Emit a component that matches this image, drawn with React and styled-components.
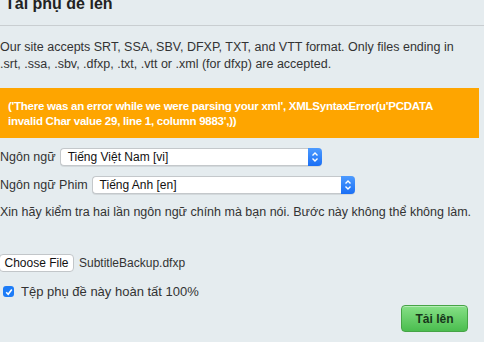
import React from 'react';
import styled, { createGlobalStyle } from 'styled-components';

// --> Styled components start <--
const GlobalStyle = createGlobalStyle`
    html, body {
        margin: 0;
        padding: 0;
        background: #e5ecef;
        overflow: hidden;
    }
    body {
        font-family: "Liberation Sans", Arial, sans-serif;
        color: #333;
    }
`;

//Page wrapper
const Page = styled.div`
    width: 484px;
    height: 342px;
    display: flex;
    flex-direction: column;
`;

//Title with the bottom rule
const Header = styled.div`
    margin-top: -5px;
    padding: 0 0 12px 5px;
    border-bottom: 1px solid #c9ced1;

    h3 {
        margin: 0;
        font-size: 16px;
        line-height: 18px;
        font-weight: bold;
        color: #222;
    }
`;

const Text = styled.p`
    margin: ${p => p.$margin || '0'};
    padding-right: ${p => p.$right || '0'};
    font-size: 12.5px;
    line-height: 17px;
    color: #333;
    white-space: ${p => p.$nowrap ? 'nowrap' : 'normal'};
`;

//orange error box
const Alert = styled.div`
    margin: 15px 5px 0 0;
    padding: 11px 30px 10px 8px;
    background: #fea500;
    color: #fff;
    font-size: 11.5px;
    letter-spacing: -0.25px;
    font-weight: bold;
    line-height: 14.5px;
`;

const Row = styled.label`
    display: flex;
    align-items: center;
    gap: 4px;
    font-size: 12.5px;
    color: #333;
    margin-top: ${p => p.$top || '0'};
`;

const Select = styled.div`
    position: relative;
    display: flex;
    align-items: center;
    width: ${p => p.$width}px;
    height: 18px;
    box-sizing: border-box;
    background: #fff;
    border: 1px solid #c4c8cb;
    border-right: none;
    border-radius: 4px;
    box-shadow: 0 1px 0 rgba(0,0,0,0.08);
    font-size: 12px;
    color: #111;
    padding-left: 7px;

    .arrows {
        position: absolute;
        right: 0;
        top: -1px;
        bottom: -1px;
        width: 14px;
        border-radius: 0 4px 4px 0;
        background: linear-gradient(#4d9bff, #1a6ff5);
        display: flex;
        align-items: center;
        justify-content: center;
    }
`;

const FileRow = styled.div`
    display: flex;
    align-items: center;
    gap: 5px;
    margin-top: 33px;
    font-size: 12px;
    color: #333;
`;

const FileButton = styled.button`
    height: 18px;
    width: 75px;
    padding: 0;
    margin-left: -1px;
    background: #fff;
    border: 1px solid #c2c6c9;
    border-radius: 4px;
    font-family: "Liberation Sans", Arial, sans-serif;
    font-size: 12px;
    color: #111;
`;

const Check = styled.label`
    display: flex;
    align-items: center;
    gap: 7px;
    margin-top: 12px;
    padding-left: 3px;
    font-size: 13px;
    line-height: 15px;
    color: #333;

    .box {
        width: 11px;
        height: 11px;
        border-radius: 3px;
        background: #1d7cf7;
        display: flex;
        align-items: center;
        justify-content: center;
    }
`;

const Actions = styled.div`
    display: flex;
    justify-content: flex-end;
    padding-right: 16px;
    margin-top: 6px;
`;

const UploadButton = styled.button`
    width: 67px;
    height: 27px;
    border: 1px solid #46a446;
    border-radius: 4px;
    background: linear-gradient(#86e086, #4bbd4f);
    box-shadow: inset 0 1px 0 rgba(255,255,255,0.4);
    font-family: "Liberation Sans", Arial, sans-serif;
    font-size: 12px;
    font-weight: bold;
    color: #17361a;
`;
// --> Styled components end <--

const Arrows = () => (
    <span className='arrows'>
        <svg width='8' height='12' viewBox='0 0 8 12' fill='none' stroke='#fff' strokeWidth='1.4'>
            <path d='M1.5 4.5 L4 2 L6.5 4.5' />
            <path d='M1.5 7.5 L4 10 L6.5 7.5' />
        </svg>
    </span>
);

export default function App(){
    return(
        <Page>
            <GlobalStyle />
            <Header><h3>Tải phụ đề lên</h3></Header>
            <Text $margin='13px 0 0 0' $right='18px'>
                Our site accepts SRT, SSA, SBV, DFXP, TXT, and VTT format. Only files ending in .srt, .ssa, .sbv, .dfxp, .txt, .vtt or .xml (for dfxp) are accepted.
            </Text>
            <Alert>
                ('There was an error while we were parsing your xml', XMLSyntaxError(u'PCDATA invalid Char value 29, line 1, column 9883',))
            </Alert>
            <Row $top='10px'>
                Ngôn ngữ
                <Select $width={262}>Tiếng Việt Nam [vi]<Arrows /></Select>
            </Row>
            <Row $top='10px'>
                Ngôn ngữ Phim
                <Select $width={263}>Tiếng Anh [en]<Arrows /></Select>
            </Row>
            <Text $margin='10px 0 0 0' $nowrap>
                Xin hãy kiểm tra hai lần ngôn ngữ chính mà bạn nói. Bước này không thể không làm.
            </Text>
            <FileRow>
                <FileButton>Choose File</FileButton>
                SubtitleBackup.dfxp
            </FileRow>
            <Check>
                <span className='box'>
                    <svg width='8' height='8' viewBox='0 0 8 8' fill='none' stroke='#fff' strokeWidth='1.6'>
                        <path d='M1.2 4.2 L3.2 6.2 L6.8 1.6' />
                    </svg>
                </span>
                Tệp phụ đề này hoàn tất 100%
            </Check>
            <Actions>
                <UploadButton>Tải lên</UploadButton>
            </Actions>
        </Page>
    );
}
